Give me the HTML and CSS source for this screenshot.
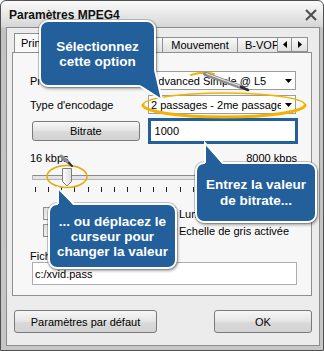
FILE: index.html
```html
<html>
<head>
<meta charset="utf-8">
<link rel="stylesheet" href="styles.css">
</head>
<body>
<div class="window">
  <div class="titlebar">
    <span class="title">Paramètres MPEG4</span>
    <svg class="close" width="12" height="12" viewBox="0 0 12 12"><path d="M1 1L11 11M11 1L1 11" stroke="#4e4e4e" stroke-width="2"/></svg>
  </div>
  <div class="client">
    <div class="tabstrip">
      <div class="tabs">
        <div class="tab active tab-main">Principal</div>
        <div class="tab tab-quant">Quantification</div>
        <div class="tab tab-motion">Mouvement</div>
        <div class="tab tab-bvop">B-VOP</div>
        <div class="tab">Avancé</div>
      </div>
      <div class="tab-scroll">
        <div class="scroll-btn"><svg width="4" height="7"><path d="M4 0V7L0 3.5Z"/></svg></div>
        <div class="scroll-btn"><svg width="4" height="7"><path d="M0 0V7L4 3.5Z"/></svg></div>
      </div>
    </div>

    <div class="panel">
      <div class="field-row">
        <span class="field-label">Profil @ Niveau</span>
        <div class="combo"><span class="combo-text">Advanced Simple @ L5</span><span class="combo-arrow"><svg width="7" height="4"><path d="M0 0H7L3.5 4Z"/></svg></span></div>
      </div>
      <div class="field-row second">
        <span class="field-label">Type d'encodage</span>
        <div class="combo"><span class="combo-text">2 passages - 2me passage</span><span class="combo-arrow"><svg width="7" height="4"><path d="M0 0H7L3.5 4Z"/></svg></span></div>
      </div>
      <div class="bitrate-row">
        <div class="btn bitrate-btn">Bitrate</div>
        <div class="bitrate-input">1000</div>
      </div>
      <div class="scale">
        <span>16 kbps</span>
        <span>8000 kbps</span>
      </div>
      <div class="slider">
        <div class="slider-track"></div>
        <div class="ticks">
          <i></i><i></i><i></i><i></i><i></i><i></i><i></i><i></i><i></i><i></i><i></i>
          <i></i><i></i><i></i><i></i><i></i><i></i><i></i><i></i><i></i><i></i>
        </div>
        <svg class="thumb" width="11" height="19" viewBox="0 0 11 19">
          <defs><linearGradient id="tg" x1="0" x2="1"><stop offset="0" stop-color="#ffffff"/><stop offset="1" stop-color="#dcdcdc"/></linearGradient></defs>
          <path d="M0.5 0.5H9.5V13.5L5 18L0.5 13.5Z" fill="url(#tg)" stroke="#7d7d7d"/>
        </svg>
      </div>
      <div class="checks">
        <label class="check"><span class="checkbox"></span>Quart de pixel</label>
        <label class="check"><span class="checkbox"></span>Lumi masking</label>
        <label class="check"><span class="checkbox"></span>Compensation globale</label>
        <label class="check"><span class="checkbox"></span>Echelle de gris activée</label>
      </div>
      <div class="file-label">Fichier de statistiques</div>
      <div class="text-input">c:/xvid.pass</div>
    </div>

    <div class="actions">
      <div class="btn btn-default">Paramètres par défaut</div>
      <div class="btn btn-ok">OK</div>
    </div>
  </div>
</div>

<svg class="marks" width="324" height="351" viewBox="0 0 324 351">
  <g fill="none" stroke="#f0b400" stroke-linecap="round">
    <ellipse cx="224" cy="105" rx="81" ry="12" stroke-width="1.6"/>
    <path d="M143 105 A81 12 0 0 0 305 105" stroke-width="3"/>
    <path d="M191 75 Q203 71 214 74" stroke-width="2"/>
    <ellipse cx="67" cy="176.5" rx="20" ry="11" stroke-width="1.5" stroke="#e2ac0a"/>
  </g>
  <line x1="205" y1="74" x2="241" y2="87" stroke="#8c8c8c" stroke-width="4" stroke-linecap="round"/>
  <line x1="206" y1="73.5" x2="240" y2="86" stroke="#e4e4e4" stroke-width="1.2"/>
  <line x1="241" y1="87" x2="248" y2="90" stroke="#2c2c2c" stroke-width="2.5" stroke-linecap="round"/>
  <line x1="61" y1="156" x2="69" y2="163" stroke="#8c8c8c" stroke-width="3" stroke-linecap="round"/>
  <line x1="69" y1="163" x2="72" y2="166" stroke="#2c2c2c" stroke-width="2" stroke-linecap="round"/>
</svg>

<div class="callout callout-select">
  <svg class="callout-tail" width="130" height="90"><polygon points="101,66 123,80 116,50 100,50" fill="#235f9a"/><polyline points="101,66 123,80 116,50" fill="none" stroke="#fff" stroke-width="2"/></svg>
  <span>Sélectionnez<br>cette option</span>
</div>
<div class="callout callout-bitrate">
  <svg class="callout-tail up" width="40" height="24"><polygon points="10,22 10,0 28,22" fill="#235f9a"/><polyline points="10,20 10,0 28,20" fill="none" stroke="#fff" stroke-width="2"/></svg>
  <span>Entrez la valeur<br>de bitrate...</span>
</div>
<div class="callout callout-slider">
  <svg class="callout-tail up" width="40" height="24"><polygon points="10,22 10,4 26,22" fill="#235f9a"/><polyline points="10,20 10,4 26,20" fill="none" stroke="#fff" stroke-width="2"/></svg>
  <span>... ou déplacez le<br>curseur pour<br>changer la valeur</span>
</div>
</body>
</html>
```

FILE: styles.css
```css
* {
  box-sizing: border-box;
}

body {
  margin: 0;
  position: relative;
  width: 324px;
  height: 351px;
  overflow: hidden;
  background: #fff;
  font-family: "Liberation Sans", Arial, sans-serif;
  font-size: 11px;
  color: #000;
}

/* window frame */
.window {
  width: 324px;
  height: 351px;
  border: 1px solid #505050;
  border-radius: 6px 6px 0 0;
  background: linear-gradient(#fbfbfb, #d6d6d6 26px, #c2c2c2 27px, #c6c6c6);
  padding: 0 3px 4px 5px;
  display: flex;
  flex-direction: column;
}

.titlebar {
  height: 26px;
  flex: none;
  display: flex;
  align-items: center;
  justify-content: space-between;
  padding: 1px 3px 0 3px;
}

.title {
  font-weight: bold;
  font-size: 12px;
  color: #111;
}

.client {
  flex: 1;
  border: 1px solid #8d8d8d;
  background: #ececec;
  display: flex;
  flex-direction: column;
  padding: 5px 7px 0 5px;
}

/* tabs */
.tabstrip {
  display: flex;
  height: 19px;
  flex: none;
  position: relative;
  z-index: 1;
}

.tabs {
  display: flex;
  align-items: flex-start;
  width: 265px;
  overflow: hidden;
  padding-left: 2px;
}

.tab {
  flex: none;
  height: 15px;
  margin-top: 4px;
  border: 1px solid #8e8f8f;
  border-bottom: none;
  border-right: none;
  background: linear-gradient(#f8f8f8, #e0e0e0);
  line-height: 14px;
  text-align: center;
  white-space: nowrap;
}

.tab.active {
  height: 20px;
  margin-top: 0;
  background: #f9f9f9;
  border-right: 1px solid #8e8f8f;
  text-align: left;
  padding-left: 6px;
  line-height: 18px;
}

.tab-main { width: 56px; }
.tab-quant { width: 92px; border-left: none; }
.tab-motion { width: 75px; }
.tab-bvop { width: 50px; text-align: left; padding-left: 7px; }

.tab-scroll {
  display: flex;
  margin-top: 4px;
}

.scroll-btn {
  width: 15px;
  height: 15px;
  border: 1px solid #8e8f8f;
  background: linear-gradient(#f8f8f8, #e0e0e0);
  display: flex;
  align-items: center;
  justify-content: center;
}

.scroll-btn + .scroll-btn {
  width: 16px;
  border-left: none;
}

/* panel */
.panel {
  height: 244px;
  flex: none;
  border: 1px solid #8e8f8f;
  background: #f7f7f7;
  padding: 18px 13px 0 17px;
}

.field-row {
  display: flex;
  align-items: center;
  height: 19px;
}

.field-row.second {
  margin-top: 5px;
}

.field-label {
  width: 118px;
  flex: none;
}

.combo {
  width: 148px;
  height: 19px;
  background: #fff;
  border: 1px solid #9c9c9c;
  display: flex;
  align-items: center;
  padding-left: 2px;
}

.combo-text {
  flex: 1;
  white-space: nowrap;
  overflow: hidden;
}

.combo-arrow {
  width: 14px;
  flex: none;
  display: flex;
  justify-content: center;
}

.bitrate-row {
  display: flex;
  align-items: center;
  height: 26px;
  margin-top: 4px;
}

.btn {
  border: 1px solid #7a7a7a;
  border-radius: 3px;
  background: linear-gradient(#f7f7f7, #e4e4e4 50%, #dadada 51%, #d2d2d2);
  display: flex;
  align-items: center;
  justify-content: center;
}

.bitrate-btn {
  width: 108px;
  height: 20px;
  margin-left: 2px;
  margin-right: 8px;
}

.bitrate-input {
  width: 151px;
  height: 26px;
  border: 3px solid #235f9a;
  background: #fff;
  padding-left: 4px;
  display: flex;
  align-items: center;
}

.scale {
  display: flex;
  justify-content: space-between;
  width: 267px;
  height: 12px;
  line-height: 12px;
  margin-top: 8px;
}

.slider {
  position: relative;
  width: 267px;
  height: 24px;
  margin: 4px 0 0 2px;
  padding-top: 7px;
}

.slider-track {
  height: 5px;
  border: 1px solid #b4b4b4;
  border-top-color: #8a8a8a;
  background: #e4e4e4;
  border-radius: 1px;
}

.ticks {
  display: flex;
  justify-content: space-between;
  margin-top: 7px;
  padding-left: 3px;
}

.ticks i {
  width: 1px;
  height: 5px;
  background: #222;
}

.thumb {
  position: absolute;
  left: 30px;
  top: 0;
}

.checks {
  display: grid;
  grid-template-columns: 120px 1fr;
  row-gap: 4px;
  margin-top: 15px;
  padding-left: 13px;
}

.check {
  display: flex;
  align-items: center;
  gap: 3px;
  height: 13px;
  white-space: nowrap;
}

.checkbox {
  width: 13px;
  height: 13px;
  flex: none;
  border: 1px solid #8f8f8f;
  background: linear-gradient(135deg, #dcdcdc, #fdfdfd);
}

.file-label {
  height: 12px;
  line-height: 12px;
  margin-top: 13px;
}

.text-input {
  width: 265px;
  height: 23px;
  margin-left: 2px;
  border: 1px solid #abadb3;
  background: #fff;
  padding-left: 2px;
  display: flex;
  align-items: center;
}

.actions {
  display: flex;
  justify-content: space-between;
  margin-top: 14px;
  padding-left: 2px;
}

.btn-default {
  width: 143px;
  height: 23px;
}

.btn-ok {
  width: 98px;
  height: 23px;
}

/* annotations */
.marks {
  position: absolute;
  left: 0;
  top: 0;
  z-index: 2;
  pointer-events: none;
}

.callout {
  position: absolute;
  z-index: 3;
  background: #235f9a;
  border: 2px solid #fff;
  border-radius: 9px;
  box-shadow: 0 0 0 1px rgba(0, 0, 0, 0.2), 1px 2px 3px rgba(0, 0, 0, 0.35);
  color: #fff;
  font-weight: bold;
  font-size: 13.5px;
  line-height: 15px;
  text-align: center;
  display: flex;
  align-items: center;
  justify-content: center;
}

.callout span {
  position: relative;
}

.callout-tail {
  position: absolute;
  left: -2px;
  top: -2px;
  overflow: visible;
}

.callout-tail.up {
  top: -21px;
}

.callout-select {
  left: 39px;
  top: 20px;
  width: 117px;
  height: 67px;
}

.callout-bitrate {
  left: 195px;
  top: 162px;
  width: 122px;
  height: 61px;
  line-height: 16px;
}

.callout-slider {
  left: 48px;
  top: 203px;
  width: 129px;
  height: 66px;
}
```
